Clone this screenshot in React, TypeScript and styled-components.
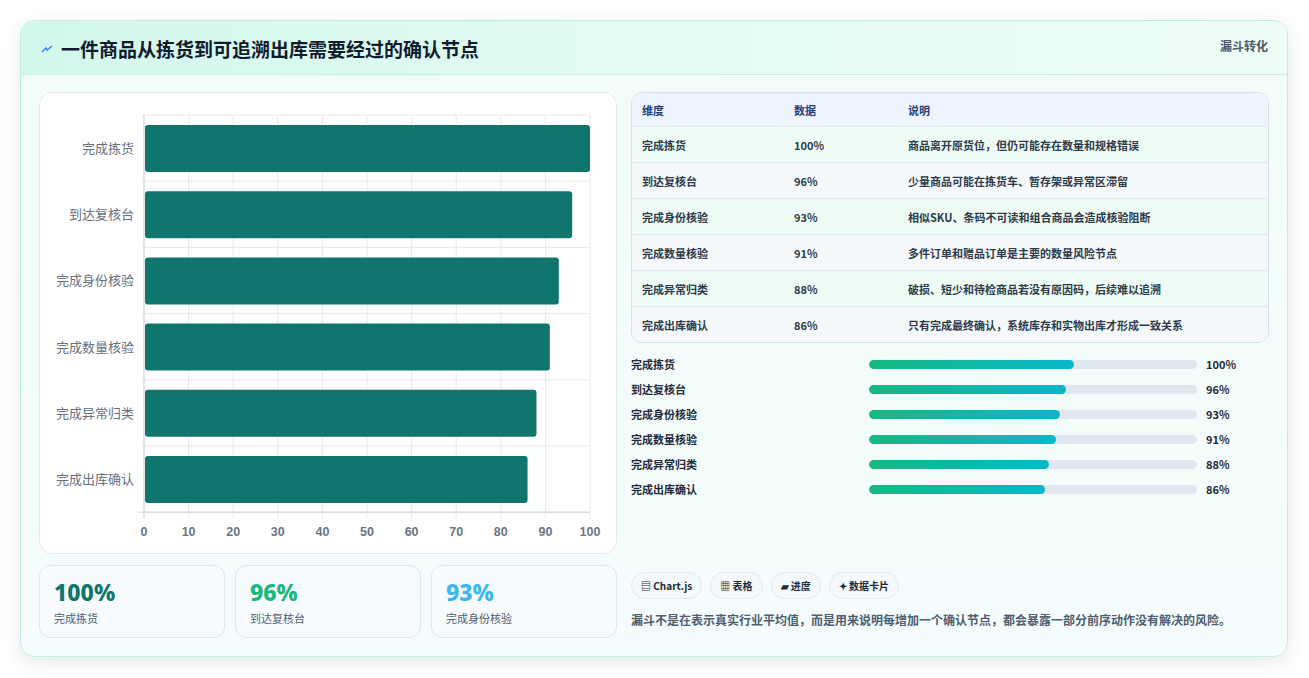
import React from "react";
import styled, { createGlobalStyle } from "styled-components";

const G = createGlobalStyle`
  body { margin: 0; background: #fff; font-family: "Noto Sans CJK SC", "Noto Sans", sans-serif; }
`;

const data = [
  { n: "完成拣货", v: 100, d: "商品离开原货位，但仍可能存在数量和规格错误" },
  { n: "到达复核台", v: 96, d: "少量商品可能在拣货车、暂存架或异常区滞留" },
  { n: "完成身份核验", v: 93, d: "相似SKU、条码不可读和组合商品会造成核验阻断" },
  { n: "完成数量核验", v: 91, d: "多件订单和赠品订单是主要的数量风险节点" },
  { n: "完成异常归类", v: 88, d: "破损、短少和待检商品若没有原因码，后续难以追溯" },
  { n: "完成出库确认", v: 86, d: "只有完成最终确认，系统库存和实物出库才形成一致关系" },
];

const Page = styled.div`
  width: 1309px; height: 678px; box-sizing: border-box; padding: 20px 21px 21px 20px;
`;
const Card = styled.div`
  height: 637px; box-sizing: border-box; border: 1px solid #bfeee0; border-radius: 14px; overflow: hidden;
  background: linear-gradient(180deg, #f1fdf8, #f5fcfd);
  box-shadow: 0 6px 18px rgba(15, 60, 60, 0.1);
  display: flex; flex-direction: column;
`;
const Header = styled.div`
  height: 55px; box-sizing: border-box; display: flex; justify-content: space-between; align-items: flex-start;
  padding: 0 19px 0 20px; background: linear-gradient(90deg, #d3f7ec, #e5fcf4 60%, #eefdf6);
  border-bottom: 1px solid #c9eee3;
`;
const Title = styled.h1`
  margin: 14px 0 0; font-size: 19px; font-weight: 700; color: #111b2e; display: flex; align-items: center; gap: 8px;
`;
const Tag = styled.div`margin-top: 16px; font-size: 12px; font-weight: 700; color: #4d5b6d;`;
const Body = styled.div`
  flex: 1; display: grid; grid-template-columns: 578px 638px; gap: 14px; padding: 17px 18px 18px 18px;
`;
const Col = styled.div`display: flex; flex-direction: column;`;
const ChartBox = styled.div`
  height: 462px; box-sizing: border-box; background: #fff; border: 1px solid #e2eaf0; border-radius: 13px;
`;
const Stats = styled.div`display: grid; grid-template-columns: repeat(3, 1fr); gap: 10px; margin-top: 11px;`;
const Stat = styled.div`
  height: 73px; box-sizing: border-box; border: 1px solid #dbe7f3; border-radius: 11px; background: #f8fbfe;
  padding: 12px 14px;
`;
const StatV = styled.div<{ c: string }>`font: 800 23px/28px "Noto Sans", sans-serif; color: ${p => p.c};`;
const StatL = styled.div`font-size: 11px; color: #4e5d70; margin-top: 4px;`;

const Table = styled.div`
  border: 1px solid #d3e2ee; border-radius: 11px; overflow: hidden; background: #fff;
`;
const Row = styled.div<{ head?: boolean; alt?: boolean }>`
  display: grid; grid-template-columns: 152px 114px 1fr; height: ${p => (p.head ? 33 : 35)}px; align-items: center;
  padding-left: 10px; font-size: 11px; font-weight: ${p => (p.head ? 700 : 600)};
  color: ${p => (p.head ? "#25407a" : "#2d3a4b")};
  background: ${p => (p.head ? "#eef4fd" : p.alt ? "#f6f9fb" : "#effcf6")};
  border-top: ${p => (p.head ? "none" : "1px solid #dfe8ee")};
`;
const Bars = styled.div`display: flex; flex-direction: column; gap: 7px; margin-top: 12px;`;
const BarRow = styled.div`
  display: grid; grid-template-columns: 238px 328px 1fr; column-gap: 0; align-items: center; height: 18px;
  font-size: 11px; font-weight: 600; color: #1f2a3a;
`;
const Track = styled.div`height: 9px; border-radius: 5px; background: #e1e7ef; overflow: hidden;`;
const Fill = styled.div`height: 100%; border-radius: 5px; background: linear-gradient(90deg, #17b981, #09b6cb);`;
const Val = styled.div`padding-left: 9px; font-weight: 700;`;
const Chips = styled.div`display: flex; gap: 8px; margin-top: 74px;`;
const Chip = styled.div`
  height: 27px; box-sizing: border-box; padding: 0 9px; border: 1px solid #e1e8ef; border-radius: 14px; background: #f6f9fb;
  display: flex; align-items: center; gap: 4px; font-size: 10px; font-weight: 700; color: #1f2a3a;
`;
const Note = styled.p`margin: 11px 0 0; font-size: 12px; line-height: 20px; font-weight: 600; color: #4f5d6f;`;

const Chart = () => {
  const x0 = 104, x1 = 550, top = 22, bh = 66.2;
  const sx = (v: number) => x0 + ((x1 - x0) * v) / 100;
  return (
    <svg width="576" height="460" style={{ display: "block" }}>
      {Array.from({ length: 11 }, (_, i) => (
        <line key={i} x1={sx(i * 10)} x2={sx(i * 10)} y1={top} y2={top + 6 * bh + 6} stroke="#e6e9ee" />
      ))}
      {Array.from({ length: 7 }, (_, i) => (
        <line key={i} x1={x0 - 2} x2={x1} y1={top + i * bh} y2={top + i * bh} stroke="#e6e9ee" />
      ))}
      <line x1={x0} x2={x0} y1={top} y2={top + 6 * bh + 6} stroke="#cfd4da" />
      <line x1={x0 - 6} x2={x1} y1={top + 6 * bh} y2={top + 6 * bh} stroke="#cfd4da" />
      {data.map((d, i) => (
        <g key={d.n}>
          <rect x={x0 + 1} y={top + i * bh + 10} width={sx(d.v) - x0 - 1} height={47} rx={3} fill="#10766d" />
          <text x={x0 - 10} y={top + i * bh + 38} textAnchor="end" fontSize="13" fill="#66707e"
            fontFamily='"Noto Sans CJK SC", sans-serif'>{d.n}</text>
        </g>
      ))}
      {Array.from({ length: 11 }, (_, i) => (
        <text key={i} x={sx(i * 10)} y={top + 6 * bh + 24} textAnchor="middle" fontSize="12.5" fontWeight="700"
          fill="#6b7484" fontFamily='"Liberation Sans", sans-serif'>{i * 10}</text>
      ))}
    </svg>
  );
};

export default function App() {
  return (
    <Page>
      <G />
      <Card>
        <Header>
          <Title>
            <svg width="12" height="10" viewBox="0 0 12 10"><path d="M1 8 L5 4 L6 6 L11 2" stroke="#3b82f6" strokeWidth="1.5" fill="none" /></svg>
            一件商品从拣货到可追溯出库需要经过的确认节点
          </Title>
          <Tag>漏斗转化</Tag>
        </Header>
        <Body>
          <Col>
            <ChartBox><Chart /></ChartBox>
            <Stats>
              <Stat><StatV c="#10766d">100%</StatV><StatL>完成拣货</StatL></Stat>
              <Stat><StatV c="#19b67e">96%</StatV><StatL>到达复核台</StatL></Stat>
              <Stat><StatV c="#3ab8ee">93%</StatV><StatL>完成身份核验</StatL></Stat>
            </Stats>
          </Col>
          <Col>
            <Table>
              <Row head><span>维度</span><span>数据</span><span>说明</span></Row>
              {data.map((d, i) => (
                <Row key={d.n} alt={i % 2 === 1}><span>{d.n}</span><span>{d.v}%</span><span>{d.d}</span></Row>
              ))}
            </Table>
            <Bars>
              {data.map(d => (
                <BarRow key={d.n}>
                  <span>{d.n}</span>
                  <Track><Fill style={{ width: `${d.v * 0.625}%` }} /></Track>
                  <Val>{d.v}%</Val>
                </BarRow>
              ))}
            </Bars>
            <Chips>
              <Chip>▤ Chart.js</Chip>
              <Chip>▦ 表格</Chip>
              <Chip>▰ 进度</Chip>
              <Chip>✦ 数据卡片</Chip>
            </Chips>
            <Note>漏斗不是在表示真实行业平均值，而是用来说明每增加一个确认节点，都会暴露一部分前序动作没有解决的风险。</Note>
          </Col>
        </Body>
      </Card>
    </Page>
  );
}
